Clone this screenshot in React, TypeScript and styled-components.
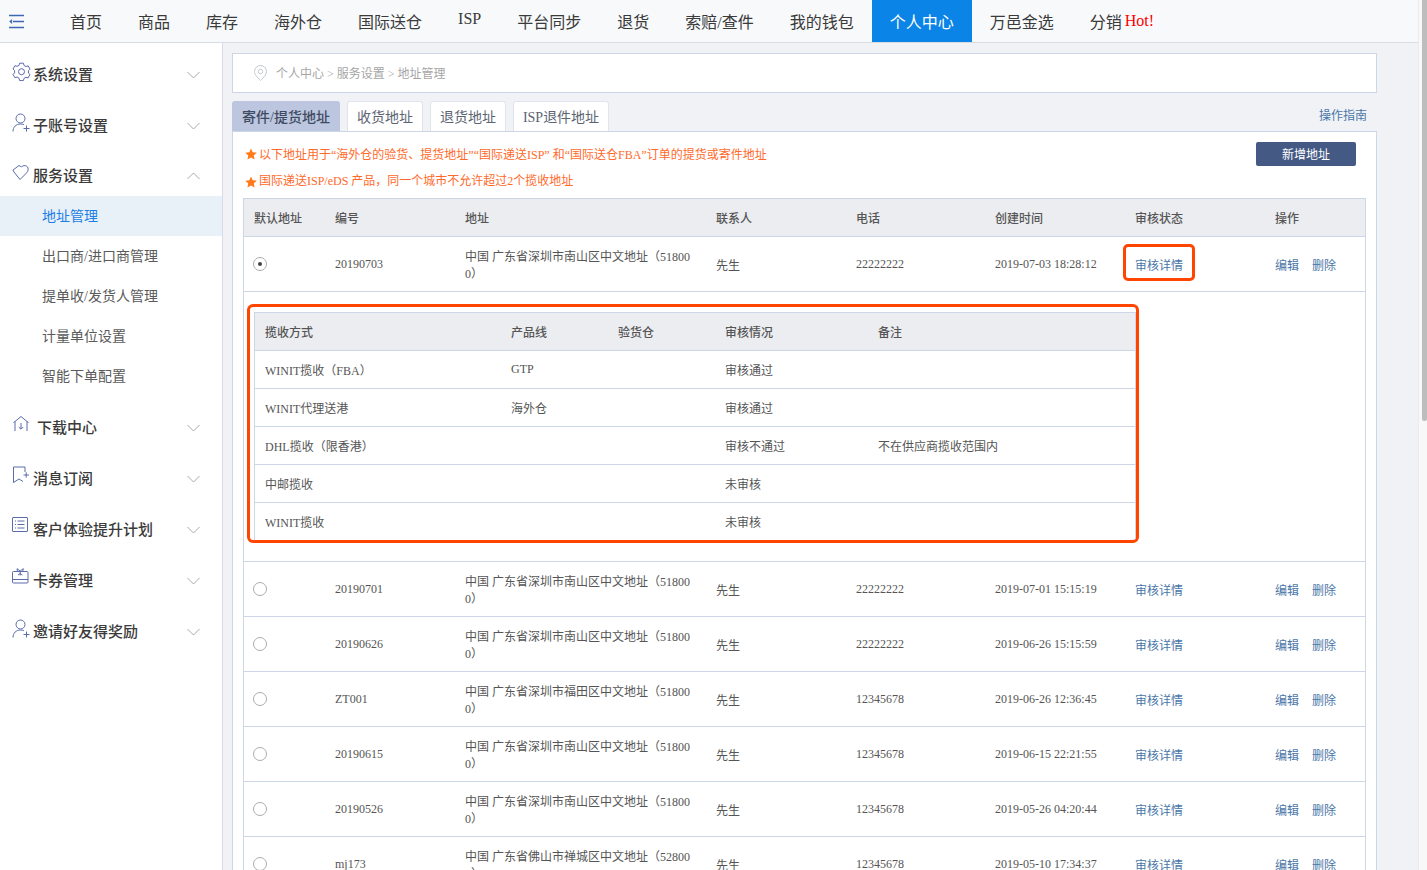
import React from "react";
import styled, { createGlobalStyle } from "styled-components";

const GlobalStyle = createGlobalStyle`
  html, body {
    margin: 0;
    padding: 0;
    height: 870px;
    overflow: hidden;
    background: #f0f2f6;
    font-family: "Liberation Serif", "Noto Sans CJK SC", serif;
    color: #555;
  }
  * { box-sizing: border-box; }
`;

const ICON = "#5a6cab";

const navItems = ["首页", "商品", "库存", "海外仓", "国际送仓", "ISP", "平台同步", "退货", "索赔/查件", "我的钱包", "个人中心", "万邑金选"];

const PersonPlus = () => (
  <svg width="18" height="20" viewBox="0 0 18 20" fill="none" stroke={ICON} strokeWidth="1">
    <circle cx="8.5" cy="5.5" r="4.5" />
    <path d="M1 18.5c0-4.4 3-7.5 7.5-7.5 1.3 0 2.4.2 3.4.7" />
    <path d="M11.5 15.5h6M14.5 12.5v6" />
  </svg>
);

const icons: Record<string, React.ReactNode> = {
  gear: (
    <svg width="19" height="19" viewBox="0 0 19 19" fill="none" stroke={ICON} strokeWidth="1">
      <path d="M7.6 1.2h3.8l.6 2.2 1.9 1.1 2.2-.6 1.9 3.3-1.6 1.6v2.2l1.6 1.6-1.9 3.3-2.2-.6-1.9 1.1-.6 2.2H7.6L7 16.2l-1.9-1.1-2.2.6L1 12.4l1.6-1.6V8.6L1 7l1.9-3.3 2.2.6L7 3.4z" />
      <circle cx="9.5" cy="9.7" r="3" />
    </svg>
  ),
  person: <PersonPlus />,
  heart: (
    <svg width="18" height="18" viewBox="0 0 18 18" fill="none" stroke={ICON} strokeWidth="1">
      <path d="M1 6 7 1.500 9.500 3C11 1 15 1 16 4c.8 2.500-1 4.500-2.500 6L8 15.500 2 8C1.300 7 1 6.800 1 6z" />
    </svg>
  ),
  download: (
    <svg width="18" height="18" viewBox="0 0 18 18" fill="none" stroke={ICON} strokeWidth="1">
      <path d="M3 16V6.500L9 1.500l6 5V16" />
      <path d="M1.500 7.500 3 6.500M16.500 7.500 15 6.500" />
      <path d="M9 8v6M6.800 12 9 14.200 11.200 12" />
    </svg>
  ),
  bookmark: (
    <svg width="18" height="18" viewBox="0 0 18 18" fill="none" stroke={ICON} strokeWidth="1">
      <path d="M13 6V1H1.500v15.500L7 13l4 2.500" />
      <path d="M11.500 9h5.500M14.200 6.300v5.400" />
    </svg>
  ),
  list: (
    <svg width="16" height="16" viewBox="0 0 16 16" fill="none" stroke={ICON} strokeWidth="1">
      <rect x="0.500" y="0.500" width="15" height="14" rx="0.500" />
      <path d="M5.500 4h7M5.500 7.500h7M5.500 11h7M3 4h1M3 7.500h1M3 11h1" />
    </svg>
  ),
  gift: (
    <svg width="18" height="16" viewBox="0 0 18 16" fill="none" stroke={ICON} strokeWidth="1">
      <rect x="0.500" y="3.500" width="15.500" height="11.500" rx="1" />
      <path d="M.5 11.500h15.500" />
      <path d="M5.500 3.500 5 .7l3.200 2.200L11.300.7l-.6 2.800M8.200 3v4.500M6 7l2.200-1.500L10.400 7" />
    </svg>
  ),
};

type Group = { icon: string; title: string; wide?: boolean; open?: boolean; subs?: string[] };

const groups: Group[] = [
  { icon: "gear", title: "系统设置" },
  { icon: "person", title: "子账号设置" },
  { icon: "heart", title: "服务设置", open: true, subs: ["地址管理", "出口商/进口商管理", "提单收/发货人管理", "计量单位设置", "智能下单配置"] },
  { icon: "download", title: "下载中心", wide: true },
  { icon: "bookmark", title: "消息订阅" },
  { icon: "list", title: "客户体验提升计划" },
  { icon: "gift", title: "卡券管理" },
  { icon: "person", title: "邀请好友得奖励" },
];

const columns = ["默认地址", "编号", "地址", "联系人", "电话", "创建时间", "审核状态", "操作"];

const SZ = "中国 广东省深圳市南山区中文地址（518000）";

const rows = [
  { code: "20190701", addr: SZ, phone: "22222222", time: "2019-07-01 15:15:19" },
  { code: "20190626", addr: SZ, phone: "22222222", time: "2019-06-26 15:15:59" },
  { code: "ZT001", addr: "中国 广东省深圳市福田区中文地址（518000）", phone: "12345678", time: "2019-06-26 12:36:45" },
  { code: "20190615", addr: SZ, phone: "12345678", time: "2019-06-15 22:21:55" },
  { code: "20190526", addr: SZ, phone: "12345678", time: "2019-05-26 04:20:44" },
  { code: "mj173", addr: "中国 广东省佛山市禅城区中文地址（528000）", phone: "12345678", time: "2019-05-10 17:34:37" },
];

const pickups = [
  { way: "WINIT揽收（FBA）", line: "GTP", state: "审核通过", note: "" },
  { way: "WINIT代理送港", line: "海外仓", state: "审核通过", note: "" },
  { way: "DHL揽收（限香港）", line: "", state: "审核不通过", note: "不在供应商揽收范围内" },
  { way: "中邮揽收", line: "", state: "未审核", note: "" },
  { way: "WINIT揽收", line: "", state: "未审核", note: "" },
];

const Shell = styled.div`
  display: flex;
  width: 1427px;
  height: 870px;
  overflow: hidden;
`;

const Main = styled.div`
  width: 1418px;
  display: flex;
  flex-direction: column;
`;

const ScrollTrack = styled.div`
  width: 9px;
  padding-left: 3px;
  background: #f8f8f8;
  border-left: 1px solid #ececec;
`;

const ScrollThumb = styled.div`
  height: 421px;
  background: #bdbdbd;
  border-radius: 0 0 3px 3px;
`;

const TopBar = styled.header`
  flex: none;
  height: 43px;
  display: flex;
  align-items: stretch;
  background: #f7f9fb;
  border-bottom: 1px solid #d9dde3;
`;

const MenuToggle = styled.div`
  width: 52px;
  padding-left: 9px;
  display: flex;
  align-items: center;
`;

const NavItem = styled.div<{ $active?: boolean; $raised?: boolean }>`
  padding: ${(p) => (p.$raised ? "0 18px 4px" : "0 18px")};
  display: flex;
  align-items: center;
  font-size: 16px;
  white-space: nowrap;
  color: ${(p) => (p.$active ? "#fff" : "#3a3a3a")};
  background: ${(p) => (p.$active ? "#0a84e6" : "transparent")};
`;

const Hot = styled.span`
  color: #f00;
  margin-left: 3px;
`;

const Body = styled.div`
  flex: 1;
  min-height: 0;
  display: flex;
`;

const Sidebar = styled.aside`
  flex: none;
  width: 223px;
  padding-top: 6px;
  background: #fff;
  border-right: 1px solid #d5dbe7;
`;

const GroupRow = styled.div<{ $open?: boolean }>`
  height: ${(p) => (p.$open ? "45px" : "51px")};
  padding: ${(p) => (p.$open ? "5px 22px 0 12px" : "0 22px 0 12px")};
  display: flex;
  align-items: center;
`;

const GroupIcon = styled.span<{ $wide?: boolean }>`
  width: ${(p) => (p.$wide ? "25px" : "21px")};
  height: 22px;
  margin-top: -3px;
  display: block;
  flex: none;
  line-height: 0;
`;

const GroupTitle = styled.span`
  flex: 1;
  padding-bottom: 3px;
  font-size: 15px;
  font-weight: 500;
  color: #3b3b3b;
`;

const SubList = styled.div`
  margin-bottom: 6px;
`;

const SubItem = styled.div<{ $active?: boolean }>`
  height: 40px;
  padding: 0 0 2px 42px;
  display: flex;
  align-items: center;
  font-size: 14px;
  color: ${(p) => (p.$active ? "#1c7ee6" : "#5a5a5a")};
  background: ${(p) => (p.$active ? "#e8f0f8" : "transparent")};
`;

const Content = styled.main`
  flex: 1;
  min-width: 0;
  padding: 10px 41px 0 9px;
  overflow: hidden;
`;

const Crumb = styled.div`
  height: 40px;
  padding-left: 20px;
  display: flex;
  align-items: center;
  gap: 8px;
  font-size: 12px;
  color: #a6a6a6;
  background: #fff;
  border: 1px solid #ccd6e6;
`;

const TabRow = styled.div`
  margin-top: 8px;
  height: 30px;
  display: flex;
  gap: 7px;
`;

const Tab = styled.div<{ $active?: boolean }>`
  padding: 0 9px 1px;
  display: flex;
  align-items: center;
  font-size: 14px;
  color: ${(p) => (p.$active ? "#3f4a63" : "#5c6472")};
  font-weight: ${(p) => (p.$active ? 500 : 400)};
  background: ${(p) => (p.$active ? "#bcc6de" : "#fff")};
  border: 1px solid ${(p) => (p.$active ? "#bcc6de" : "#dfe4ee")};
  border-bottom: none;
  border-radius: 3px 3px 0 0;
`;

const Guide = styled.a`
  margin-left: auto;
  padding: 5px 10px 0 0;
  font-size: 12px;
  color: #4a76a8;
`;

const Panel = styled.section`
  padding: 0 10px;
  background: #fff;
  border: 1px solid #ccd6e6;
`;

const PanelHead = styled.div`
  height: 66px;
  padding: 9px 10px 0 2px;
  display: flex;
  justify-content: space-between;
  align-items: flex-start;
`;

const Note = styled.div`
  height: 26px;
  display: flex;
  align-items: center;
  gap: 2px;
  font-size: 12px;
  color: #ff6a2b;
`;

const Star = styled.svg<{ $low?: boolean }>`
  margin-top: ${(p) => (p.$low ? "4px" : "0")};
`;

const AddButton = styled.button`
  width: 100px;
  height: 24px;
  margin-top: 1px;
  padding: 0;
  font-family: inherit;
  font-size: 12px;
  color: #fff;
  background: #445a85;
  border: none;
  border-radius: 2px;
`;

const Table = styled.div`
  border: 1px solid #ccd6e6;
  border-bottom: none;
`;

const RowGrid = styled.div`
  display: grid;
  grid-template-columns: 81px 130px 251px 140px 139px 140px 140px 100px;
  align-items: center;
  font-size: 12px;
  color: #555;
`;

const HeadRow = styled(RowGrid)`
  height: 38px;
  font-weight: 500;
  background: #ecedf1;
  border-bottom: 1px solid #ccd6e6;
`;

const DataRow = styled(RowGrid)`
  height: 55px;
  border-bottom: 1px solid #ccd6e6;
`;

const Cell = styled.div`
  padding-left: 10px;
`;

// 中文单元格在参考图里比数字低一点
const TextCell = styled(Cell)`
  padding-top: 2px;
`;

const AddressCell = styled(Cell)`
  padding: 4px 13px 0 10px;
  line-height: 17px;
  word-break: break-all;
`;

const Radio = styled.span<{ $checked?: boolean }>`
  width: 14px;
  height: 14px;
  margin-left: -1px;
  display: flex;
  align-items: center;
  justify-content: center;
  border: 1.5px solid #adadad;
  border-radius: 50%;
  &::after {
    content: "";
    width: 4px;
    height: 4px;
    border-radius: 50%;
    background: ${(p) => (p.$checked ? "#444" : "transparent")};
  }
`;

const Link = styled.a`
  color: #4a76a8;
`;

const Flagged = styled.span`
  position: relative;
  &::after {
    content: "";
    position: absolute;
    left: -12px;
    right: -12px;
    top: -15px;
    bottom: -8px;
    border: 3px solid #ff4500;
    border-radius: 5px;
  }
`;

const Actions = styled(TextCell)`
  display: flex;
  gap: 13px;
`;

const DetailRow = styled.div`
  height: 270px;
  padding: 12px 0 0 3px;
  border-bottom: 1px solid #ccd6e6;
`;

const DetailFrame = styled.div`
  width: 892px;
  height: 239px;
  padding: 5px 0 0 4px;
  border: 3px solid #ff4500;
  border-radius: 6px;
  overflow: hidden;
`;

const DetailTable = styled.div`
  border: 1px solid #ccd6e6;
  border-bottom: none;
  height: 100%;
`;

const DetailGrid = styled.div`
  height: 38px;
  display: grid;
  grid-template-columns: 246px 107px 107px 153px 267px;
  align-items: center;
  font-size: 12px;
  border-bottom: 1px solid #ccd6e6;
`;

const DetailHead = styled(DetailGrid)`
  font-weight: 500;
  background: #ecedf1;
`;

const Crumbs = () => (
  <Crumb>
    <svg width="15" height="16" viewBox="0 0 15 16" fill="none" stroke="#c4c9cf" strokeWidth="1">
      <path d="M7.500 15.500C4 12 1.500 9.500 1.500 6.500a6 6 0 0 1 12 0c0 3-2.500 5.500-6 9z" />
      <circle cx="7.500" cy="6.500" r="2.200" />
    </svg>
    <span>个人中心 &gt; 服务设置 &gt; 地址管理</span>
  </Crumb>
);

const StarIcon = ({ low }: { low?: boolean }) => (
  <Star $low={low} width="12" height="12" viewBox="0 0 24 24" fill="#ff7a1a">
    <polygon points="12,1 15.400,8.300 23.500,9.300 17.500,14.800 19.100,22.800 12,18.800 4.900,22.800 6.500,14.800 .5,9.300 8.600,8.300" />
  </Star>
);

function Address() {
  return (
    <>
      <GlobalStyle />
      <Shell>
        <Main>
          <TopBar>
            <MenuToggle>
              <svg width="16" height="15" viewBox="0 0 16 15" fill="none" stroke="#3f68b0" strokeWidth="1.500">
                <path d="M0 1.500h15M4 7.500h11M0 13.500h15" />
                <path d="M2.800 5.500 0.500 7.500l2.300 2z" fill="#3f68b0" strokeWidth="0.500" />
              </svg>
            </MenuToggle>
            {navItems.map((n) => (
              <NavItem key={n} $active={n === "个人中心"} $raised={n === "ISP"}>
                {n}
              </NavItem>
            ))}
            <NavItem>
              分销<Hot>Hot!</Hot>
            </NavItem>
          </TopBar>
          <Body>
            <Sidebar>
              {groups.map((g) => (
                <div key={g.title}>
                  <GroupRow $open={g.open}>
                    <GroupIcon $wide={g.wide}>{icons[g.icon]}</GroupIcon>
                    <GroupTitle>{g.title}</GroupTitle>
                    <svg width="13" height="8" viewBox="0 0 13 8" fill="none" stroke="#a9a9a9" strokeWidth="1">
                      <path d={g.open ? "M.5 7 6.500 1l6 6" : "M.5 1l6 6 6-6"} />
                    </svg>
                  </GroupRow>
                  {g.subs && (
                    <SubList>
                      {g.subs.map((s, i) => (
                        <SubItem key={s} $active={i === 0}>
                          {s}
                        </SubItem>
                      ))}
                    </SubList>
                  )}
                </div>
              ))}
            </Sidebar>
            <Content>
              <Crumbs />
              <TabRow>
                <Tab $active>寄件/提货地址</Tab>
                <Tab>收货地址</Tab>
                <Tab>退货地址</Tab>
                <Tab>ISP退件地址</Tab>
                <Guide>操作指南</Guide>
              </TabRow>
              <Panel>
                <PanelHead>
                  <div>
                    <Note>
                      <StarIcon />
                      以下地址用于“海外仓的验货、提货地址”“国际递送ISP” 和“国际送仓FBA”订单的提货或寄件地址
                    </Note>
                    <Note>
                      <StarIcon low />
                      国际递送ISP/eDS 产品，同一个城市不允许超过2个揽收地址
                    </Note>
                  </div>
                  <AddButton>新增地址</AddButton>
                </PanelHead>
                <Table>
                  <HeadRow>
                    {columns.map((c) => (
                      <Cell key={c}>{c}</Cell>
                    ))}
                  </HeadRow>
                  <DataRow>
                    <Cell>
                      <Radio $checked />
                    </Cell>
                    <Cell>20190703</Cell>
                    <AddressCell>{SZ}</AddressCell>
                    <TextCell>先生</TextCell>
                    <Cell>22222222</Cell>
                    <Cell>2019-07-03 18:28:12</Cell>
                    <TextCell>
                      <Flagged>
                        <Link>审核详情</Link>
                      </Flagged>
                    </TextCell>
                    <Actions>
                      <Link>编辑</Link>
                      <Link>删除</Link>
                    </Actions>
                  </DataRow>
                  <DetailRow>
                    <DetailFrame>
                      <DetailTable>
                        <DetailHead>
                          <Cell>揽收方式</Cell>
                          <Cell>产品线</Cell>
                          <Cell>验货仓</Cell>
                          <Cell>审核情况</Cell>
                          <Cell>备注</Cell>
                        </DetailHead>
                        {pickups.map((p) => (
                          <DetailGrid key={p.way}>
                            <Cell>{p.way}</Cell>
                            <Cell>{p.line}</Cell>
                            <Cell />
                            <Cell>{p.state}</Cell>
                            <Cell>{p.note}</Cell>
                          </DetailGrid>
                        ))}
                      </DetailTable>
                    </DetailFrame>
                  </DetailRow>
                  {rows.map((r) => (
                    <DataRow key={r.code}>
                      <Cell>
                        <Radio />
                      </Cell>
                      <Cell>{r.code}</Cell>
                      <AddressCell>{r.addr}</AddressCell>
                      <TextCell>先生</TextCell>
                      <Cell>{r.phone}</Cell>
                      <Cell>{r.time}</Cell>
                      <TextCell>
                        <Link>审核详情</Link>
                      </TextCell>
                      <Actions>
                        <Link>编辑</Link>
                        <Link>删除</Link>
                      </Actions>
                    </DataRow>
                  ))}
                </Table>
              </Panel>
            </Content>
          </Body>
        </Main>
        <ScrollTrack>
          <ScrollThumb />
        </ScrollTrack>
      </Shell>
    </>
  );
}

export default Address;
